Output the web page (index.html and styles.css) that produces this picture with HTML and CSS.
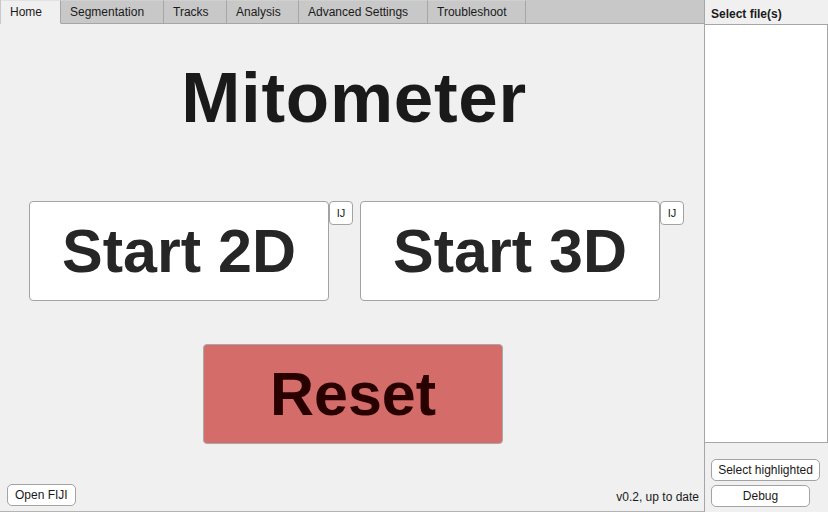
FILE: index.html
```html
<!DOCTYPE html>
<html>
<head>
<meta charset="utf-8">
<link rel="stylesheet" href="styles.css">
</head>
<body>
<div class="app">
  <div class="main">
    <div class="tabbar">
      <div class="tab active t-home">Home</div>
      <div class="tab t-seg">Segmentation</div>
      <div class="tab t-tracks">Tracks</div>
      <div class="tab t-analysis">Analysis</div>
      <div class="tab t-adv">Advanced Settings</div>
      <div class="tab t-trouble">Troubleshoot</div>
      <div class="tabfill"></div>
    </div>
    <div class="content">
      <h1 class="title">Mitometer</h1>
      <div class="startrow">
        <div class="startgroup">
          <button class="bigbtn">Start 2D</button>
          <button class="ijbtn">IJ</button>
        </div>
        <div class="startgroup">
          <button class="bigbtn">Start 3D</button>
          <button class="ijbtn">IJ</button>
        </div>
      </div>
      <div class="resetrow">
        <button class="bigbtn reset">Reset</button>
      </div>
      <div class="footer">
        <button class="smallbtn fiji">Open FIJI</button>
        <span class="version">v0.2, up to date</span>
      </div>
    </div>
  </div>
  <div class="side">
    <div class="sidehead">Select file(s)</div>
    <div class="listbox"></div>
    <div class="sidebtns">
      <button class="smallbtn sel">Select highlighted</button>
      <button class="smallbtn dbg">Debug</button>
    </div>
  </div>
</div>
</body>
</html>
```

FILE: styles.css
```css
* { box-sizing: border-box; }
html, body { margin: 0; padding: 0; }
body {
  width: 828px;
  height: 512px;
  overflow: hidden;
  background: #f0f0f0;
  font-family: "Liberation Sans", Arial, sans-serif;
  color: #1a1a1a;
}
.app {
  display: flex;
  width: 828px;
  height: 512px;
}
.main {
  width: 704px;
  height: 512px;
  display: flex;
  flex-direction: column;
  border-bottom: 1px solid #b4b4b4;
}
.tabbar {
  display: flex;
  height: 24px;
  background: #c8c8c8;
}
.tab {
  height: 24px;
  padding: 0 0 0 9px;
  font-size: 12px;
  line-height: 23px;
  border-right: 1px solid #a6a6a6;
  border-bottom: 1px solid #a6a6a6;
  border-top: 1px solid #d0d0d0;
  color: #1a1a1a;
  white-space: nowrap;
  overflow: hidden;
  flex: none;
}
.tab.active {
  background: #f0f0f0;
  border-bottom-color: #f0f0f0;
  border-top: 1px solid #e2e2e2;
  margin-left: 1px;
}
.t-home { width: 60px; }
.t-seg { width: 103px; }
.t-tracks { width: 63px; }
.t-analysis { width: 72px; }
.t-adv { width: 129px; }
.t-trouble { width: 98px; }
.tabfill {
  flex: 1;
  border-bottom: 1px solid #a6a6a6;
}
.content {
  flex: 1;
  display: flex;
  flex-direction: column;
}
.title {
  margin: 34px 0 0 0;
  font-size: 71px;
  line-height: 80px;
  font-weight: bold;
  text-align: center;
  color: #1a1a1a;
  letter-spacing: 0.7px;
  padding-left: 4px;
}
.startrow {
  display: flex;
  gap: 7px;
  margin: 63px 0 0 29px;
}
.startgroup {
  display: flex;
  align-items: flex-start;
}
button {
  font-family: "Liberation Sans", Arial, sans-serif;
  margin: 0;
  cursor: default;
}
.bigbtn {
  width: 300px;
  height: 100px;
  background: #ffffff;
  border: 1px solid #a3a3a3;
  border-radius: 4px;
  font-size: 61px;
  font-weight: bold;
  color: #262626;
  padding: 0;
  display: flex;
  align-items: center;
  justify-content: center;
}
.ijbtn {
  width: 24px;
  height: 24px;
  background: #ffffff;
  border: 1px solid #a3a3a3;
  border-radius: 4px;
  font-size: 11px;
  color: #1a1a1a;
  padding: 0;
}
.resetrow {
  display: flex;
  justify-content: center;
  margin: 43px 0 0 2px;
}
.bigbtn.reset {
  background: #d46d6a;
  color: #280000;
  border-color: #a8a8a8;
}
.footer {
  margin-top: auto;
  display: flex;
  align-items: flex-end;
  justify-content: space-between;
  padding: 0 5px 5px 7px;
}
.smallbtn {
  height: 22px;
  background: #ffffff;
  border: 1px solid #a3a3a3;
  border-radius: 5px;
  font-size: 12px;
  color: #1a1a1a;
  padding: 0 8px;
  white-space: nowrap;
}
.smallbtn.fiji {
  padding: 0 7px;
}
.version {
  font-size: 12px;
  line-height: 14px;
  padding-bottom: 2px;
  color: #1a1a1a;
}
.side {
  width: 124px;
  height: 512px;
  display: flex;
  flex-direction: column;
  border-left: 1px solid #a6a6a6;
}
.sidehead {
  height: 24px;
  font-size: 12px;
  font-weight: bold;
  line-height: 28px;
  padding-left: 6px;
  color: #1a1a1a;
}
.listbox {
  height: 419px;
  background: #ffffff;
  border: 1px solid #a6a6a6;
  border-left: none;
}
.sidebtns {
  display: flex;
  flex-direction: column;
  align-items: flex-start;
  gap: 4px;
  padding: 16px 0 0 6px;
}
.smallbtn.sel {
  width: 109px;
  padding: 0;
}
.smallbtn.dbg {
  width: 99px;
  padding: 0;
}
```
